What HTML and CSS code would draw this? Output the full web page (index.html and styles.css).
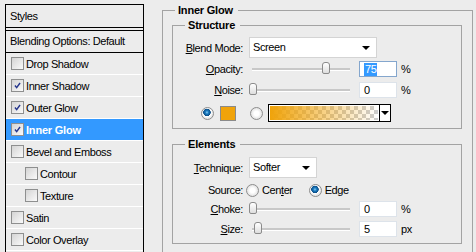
FILE: index.html
```html
<!DOCTYPE html>
<html lang="en">
<head>
  <meta charset="UTF-8" />
  <title>Layer Style - Inner Glow</title>
  <link rel="stylesheet" href="styles.css">
</head>
<body>
  <div class="page">

    <!-- Styles list -->
    <div class="styles-panel">
      <div class="panel-head">Styles</div>
      <div class="blend-row">Blending Options: Default</div>
      <ul class="effects">
        <li><span class="check"></span>Drop Shadow</li>
        <li><span class="check"><svg viewBox="0 0 13 13"><path d="M3.5 6.5 L5.5 9 L9.5 3.5"/></svg></span>Inner Shadow</li>
        <li><span class="check"><svg viewBox="0 0 13 13"><path d="M3.5 6.5 L5.5 9 L9.5 3.5"/></svg></span>Outer Glow</li>
        <li class="active"><span class="check"><svg viewBox="0 0 13 13"><path d="M3.5 6.5 L5.5 9 L9.5 3.5"/></svg></span>Inner Glow</li>
        <li><span class="check"></span>Bevel and Emboss</li>
        <li class="sub"><span class="check"></span>Contour</li>
        <li class="sub"><span class="check"></span>Texture</li>
        <li><span class="check"></span>Satin</li>
        <li><span class="check"></span>Color Overlay</li>
      </ul>
    </div>

    <!-- Inner Glow settings -->
    <fieldset class="group outer">
      <legend>Inner Glow</legend>

      <fieldset class="group structure">
        <legend>Structure</legend>
        <div class="row r-blend">
          <label class="lbl"><u>B</u>lend Mode:</label>
          <div class="select blend-select">Screen<span class="arrow"></span></div>
        </div>
        <div class="row r-opacity">
          <label class="lbl"><u>O</u>pacity:</label>
          <div class="slider"><span class="thumb" style="left:70px"></span></div>
          <div class="num focus"><span class="sel">75</span></div>
          <span class="unit">%</span>
        </div>
        <div class="row r-noise">
          <label class="lbl"><u>N</u>oise:</label>
          <div class="slider"><span class="thumb" style="left:-3px"></span></div>
          <div class="num">0</div>
          <span class="unit">%</span>
        </div>
        <div class="row r-color">
          <span class="radio on"></span>
          <span class="swatch"></span>
          <span class="radio radio-grad"></span>
          <div class="gradient">
            <span class="grad-fill"></span>
            <span class="grad-btn"><span class="arrow"></span></span>
          </div>
        </div>
      </fieldset>

      <fieldset class="group elements">
        <legend>Elements</legend>
        <div class="row r-tech">
          <label class="lbl"><u>T</u>echnique:</label>
          <div class="select tech-select">Softer<span class="arrow"></span></div>
        </div>
        <div class="row r-source">
          <label class="lbl">Source:</label>
          <span class="radio src-first"></span>
          <span class="opt">Cen<u>t</u>er</span>
          <span class="radio on src-second"></span>
          <span class="opt">Ed<u>g</u>e</span>
        </div>
        <div class="row r-choke">
          <label class="lbl"><u>C</u>hoke:</label>
          <div class="slider"><span class="thumb" style="left:-3px"></span></div>
          <div class="num">0</div>
          <span class="unit">%</span>
        </div>
        <div class="row r-size">
          <label class="lbl"><u>S</u>ize:</label>
          <div class="slider"><span class="thumb" style="left:2px"></span></div>
          <div class="num">5</div>
          <span class="unit">px</span>
        </div>
      </fieldset>
    </fieldset>

  </div>
</body>
</html>
```

FILE: styles.css
```css
body {
  margin: 0;
  background: #ececec;
  font-family: 'Liberation Sans', Arial, sans-serif;
  font-size: 11px;
  letter-spacing: -0.4px;
  color: #000;
  overflow: hidden;
}

.page {
  display: flex;
  align-items: flex-start;
  height: 252px;
  overflow: hidden;
}

/* Styles list */

.styles-panel {
  flex: none;
  box-sizing: border-box;
  width: 139px;
  height: 248px;
  margin: 4px 0 0 5px;
  border: 1px solid #000;
  border-bottom: none;
  overflow: hidden;
}

.panel-head {
  height: 22px;
  line-height: 22px;
  padding-left: 4px;
  border-bottom: 1px solid #000;
}

.blend-row {
  height: 21px;
  line-height: 21px;
  margin-top: 2px;
  padding-left: 4px;
  border-top: 1px solid #000;
  border-bottom: 1px solid #000;
}

.effects {
  list-style: none;
  margin: 0;
  padding: 0;
}

.effects li {
  display: flex;
  align-items: center;
  height: 21px;
  padding-left: 5px;
  border-bottom: 1px solid #fff;
}

.effects li.sub {
  padding-left: 19px;
}

.effects li.active {
  background: #3399ff;
  color: #fff;
  font-weight: bold;
  letter-spacing: -0.2px;
}

.check {
  box-sizing: border-box;
  width: 13px;
  height: 13px;
  margin-right: 2px;
  border: 1px solid #8e8f8f;
  background: linear-gradient(135deg, #d4d4d4, #fafafa);
}

.check svg {
  display: block;
  width: 11px;
  height: 11px;
}

.check path {
  fill: none;
  stroke: #24358c;
  stroke-width: 1.7;
}

/* Group boxes */

.group {
  margin: 0;
  padding: 0;
  border: 1px solid #a3a3a3;
  min-inline-size: 0;
}

.group legend {
  margin-left: 12px;
  padding: 0 5px 0 3px;
  line-height: 13px;
  font-weight: bold;
  letter-spacing: -0.2px;
}

.outer {
  flex: none;
  box-sizing: border-box;
  width: 311px;
  height: 248px;
  margin: 4px 0 0 18px;
  border-bottom: none;
}

.structure {
  margin: 2px 10px 0 9px;
  padding: 5px 0 6px;
}

.elements {
  margin: 9px 10px 0 9px;
  padding: 6px 0 6px;
}

/* Rows */

.row {
  display: flex;
  align-items: center;
}

.lbl {
  flex: none;
  width: 70px;
  margin-right: 6px;
  text-align: right;
}

.r-blend, .r-tech { height: 21px; }
.r-opacity { height: 16px; margin-top: 3px; }
.r-noise { height: 16px; margin-top: 5px; }
.r-color { height: 18px; margin-top: 6px; padding-left: 28px; }
.r-source { height: 14px; margin-top: 5px; }
.r-choke { height: 16px; margin-top: 4px; }
.r-size { height: 16px; margin-top: 4px; }

/* Controls */

.select {
  position: relative;
  box-sizing: border-box;
  height: 21px;
  line-height: 19px;
  padding-left: 3px;
  background: #fff;
  border: 1px solid #d4d4d4;
}

.blend-select { width: 128px; }
.tech-select { width: 68px; }

.arrow {
  position: absolute;
  right: 6px;
  top: 8px;
  border-left: 4px solid transparent;
  border-right: 4px solid transparent;
  border-top: 4px solid #000;
}

.slider {
  position: relative;
  width: 98px;
  height: 2px;
  margin-left: 3px;
  background: #c8c8c8;
  border-bottom: 1px solid #fff;
}

.thumb {
  position: absolute;
  top: -6px;
  box-sizing: border-box;
  width: 8px;
  height: 12px;
  border: 1px solid #8b8b8b;
  border-radius: 3px 3px 2px 2px;
  background: linear-gradient(#ffffff, #dedede);
}

.num {
  box-sizing: border-box;
  width: 38px;
  height: 16px;
  margin-left: 9px;
  padding-left: 4px;
  line-height: 14px;
  background: #fff;
  border: 1px solid #dde3ea;
}

.num.focus {
  border-color: #84a6cd;
}

.sel {
  background: #3399ff;
  color: #fff;
  padding: 0 1px 1px;
}

.unit {
  margin-left: 4px;
}

.radio {
  flex: none;
  box-sizing: border-box;
  width: 13px;
  height: 13px;
  border: 1px solid #8d8d8d;
  border-radius: 50%;
  background: radial-gradient(circle at 50% 50%, #ffffff 0 30%, #d6d6d6 90%);
}

.radio.on {
  background: radial-gradient(circle at 45% 40%, #8fd0f5 0, #1d7fc4 1.5px, #0b4d86 3.5px, #ffffff 4px, #e6e6e6 6px);
}

.swatch {
  box-sizing: border-box;
  width: 16px;
  height: 15px;
  margin-left: 6px;
  background: #f0a30a;
  border: 1px solid #8a8a8a;
}

.radio-grad { margin-left: 14px; }

.gradient {
  display: flex;
  box-sizing: border-box;
  width: 123px;
  height: 18px;
  margin-left: 5px;
  border: 1px solid #000;
}

.grad-fill {
  flex: 1;
  border: 1px solid #fff;
  background:
    linear-gradient(to right, #f0a30a, rgba(240, 163, 10, 0)),
    repeating-conic-gradient(#cdcdcd 0 25%, #ffffff 0 50%) 0 0 / 8px 8px;
}

.grad-btn {
  position: relative;
  width: 10px;
  border-left: 1px solid #000;
  background: #fff;
}

.grad-btn .arrow {
  right: 1px;
  top: 6px;
}

.src-first { margin-left: -3px; }
.src-second { margin-left: 16px; }

.opt {
  margin-left: 3px;
}
```
